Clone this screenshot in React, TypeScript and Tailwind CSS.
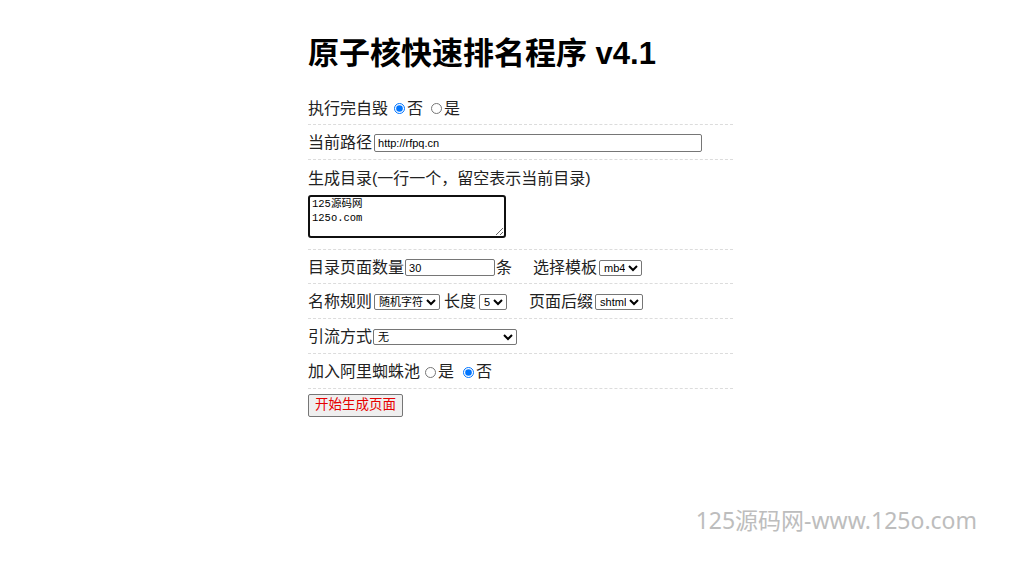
import React from "react";

const font = { fontFamily: '"Liberation Sans", "Noto Sans CJK SC", sans-serif' };

const Row = ({ children, h = "h-[35px]" }: { children: React.ReactNode; h?: string }) => (
  <div className={`${h} flex items-center pt-[2px] border-b border-dashed border-[#dcdcdc] text-[16px] text-[#222]`}>
    {children}
  </div>
);

const ctl = "text-[11px] text-black border border-[#767676] rounded-[2px] bg-white";
const radio = "w-[11px] h-[11px] m-0 mr-[2px]";

export default function App() {
  return (
    <div className="relative w-[1024px] h-[574px] bg-white overflow-hidden" style={font}>
      <div className="pl-[308px] pt-[34px]">
        <div className="w-[425px]">
          <h1 className="text-[31px] leading-[40px] font-bold text-black mb-[17px]">原子核快速排名程序 v4.1</h1>

          <Row h="h-[34px]">
            <span>执行完自毁</span>
            <label className="flex items-center ml-[6px]">
              <input type="radio" name="zh" defaultChecked className={radio} />
              <span>否</span>
            </label>
            <label className="flex items-center ml-[8px]">
              <input type="radio" name="zh" className={radio} />
              <span>是</span>
            </label>
          </Row>

          <Row>
            <span>当前路径</span>
            <input
              type="text"
              defaultValue="http://rfpq.cn"
              className={`${ctl} ml-[2px] w-[328px] h-[18px] px-[3px] outline-none`}
            />
          </Row>

          <div className="h-[90px] border-b border-dashed border-[#dcdcdc] text-[16px] text-[#222] pt-[8px]">
            <div className="leading-[22px]">生成目录(一行一个，留空表示当前目录)</div>
            <textarea
              defaultValue={"125源码网\n125o.com"}
              className="mt-[5px] w-[198px] h-[43px] border-2 border-[#101010] rounded-[3px] text-[10.5px] leading-[14px] px-[2px] py-0 text-black outline-none block"
              style={{ fontFamily: '"Liberation Mono", "Noto Sans CJK SC", monospace' }}
            />
          </div>

          <Row h="h-[34px]">
            <span>目录页面数量</span>
            <input type="text" defaultValue="30" className={`${ctl} ml-[1px] w-[90px] h-[17px] px-[3px] outline-none`} />
            <span className="ml-[1px]">条</span>
            <span className="ml-[21px]">选择模板</span>
            <select className={`${ctl} ml-[2px] h-[16px] w-[43px] px-0`} defaultValue="mb4">
              <option>mb4</option>
            </select>
          </Row>

          <Row>
            <span>名称规则</span>
            <select className={`${ctl} ml-[2px] h-[16px] w-[66px] px-0`}>
              <option>随机字符</option>
            </select>
            <span className="ml-[4px]">长度</span>
            <select className={`${ctl} ml-[3px] h-[16px] w-[28px] px-0`}>
              <option>5</option>
            </select>
            <span className="ml-[22px]">页面后缀</span>
            <select className={`${ctl} ml-[2px] h-[16px] w-[48px] px-0`}>
              <option>shtml</option>
            </select>
          </Row>

          <Row>
            <span>引流方式</span>
            <select className={`${ctl} ml-[1px] h-[16px] w-[144px] px-0`}>
              <option>无</option>
            </select>
          </Row>

          <Row>
            <span>加入阿里蜘蛛池</span>
            <label className="flex items-center ml-[5px]">
              <input type="radio" name="ali" className={radio} />
              <span>是</span>
            </label>
            <label className="flex items-center ml-[9px]">
              <input type="radio" name="ali" defaultChecked className={radio} />
              <span>否</span>
            </label>
          </Row>

          <button className="mt-[5px] h-[23px] px-[6px] bg-[#efefef] border border-[#767676] rounded-[2px] text-[13.5px] text-[#e60000]">
            开始生成页面
          </button>
        </div>
      </div>

      <div className="absolute right-[47px] top-[503px] text-[23px] text-[#bdbdbd]" style={{ fontFamily: '"Noto Sans", "Noto Sans CJK SC", sans-serif' }}>
        125源码网-www.125o.com
      </div>
    </div>
  );
}
